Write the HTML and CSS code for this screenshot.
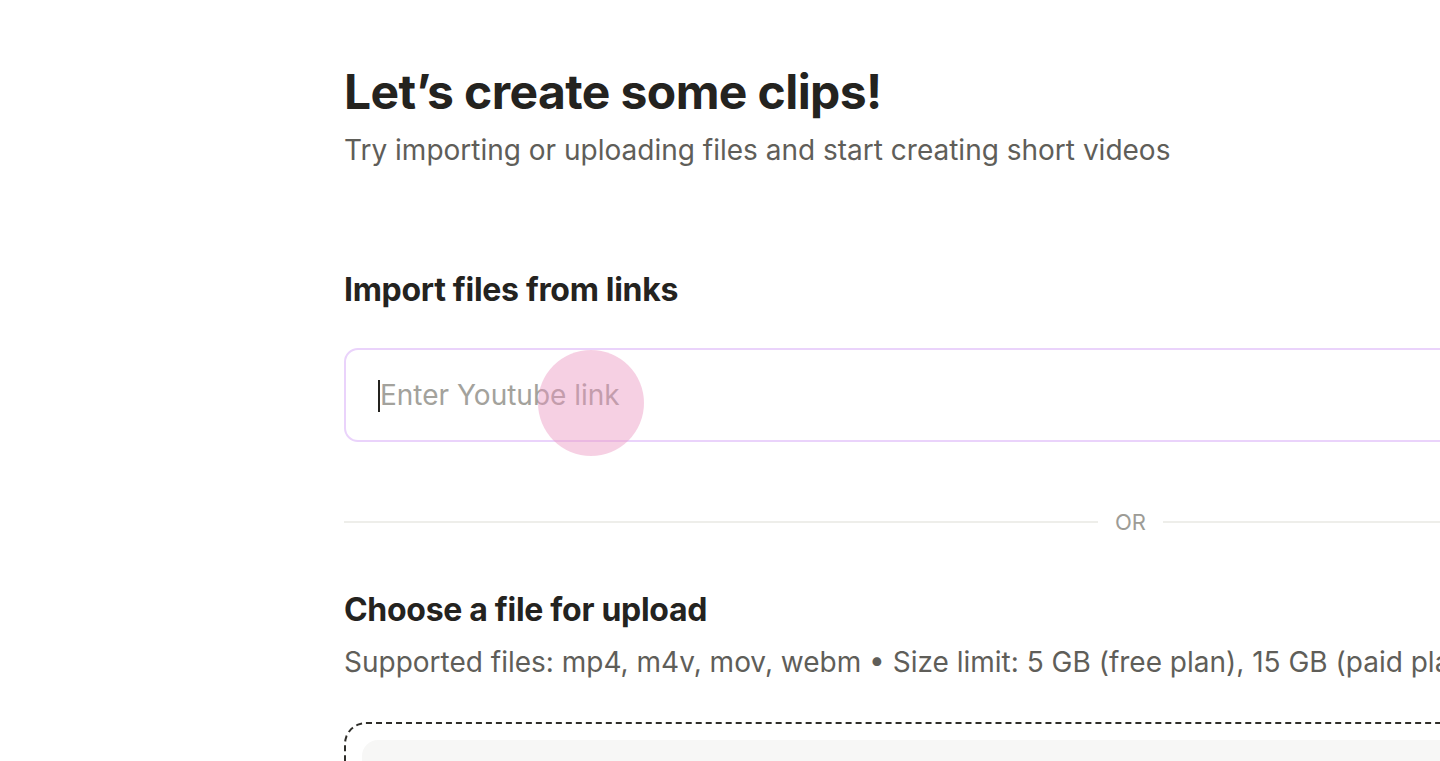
FILE: index.html
```html
<!DOCTYPE html>
<html lang="en">
<head>
  <meta charset="UTF-8">
  <meta name="viewport" content="width=device-width, initial-scale=1.0">
  <title>Create clips</title>
  <link rel="stylesheet" href="styles.css">
</head>
<body>
  <main class="page">
    <h1 class="title">Let’s create some clips!</h1>
    <p class="subtitle">Try importing or uploading files and start creating short videos</p>

    <section class="import">
      <h2 class="section-title">Import files from links</h2>
      <div class="link-field">
        <span class="caret"></span>
        <input type="text" class="link-input" placeholder="Enter Youtube link">
        <span class="touch-dot"></span>
      </div>
    </section>

    <div class="divider">
      <span class="divider-line divider-left"></span>
      <span class="divider-text">OR</span>
      <span class="divider-line"></span>
    </div>

    <section class="upload">
      <h2 class="section-title">Choose a file for upload</h2>
      <p class="upload-note">Supported files: mp4, m4v, mov, webm • Size limit: 5 GB (free plan), 15 GB (paid plan)</p>
      <div class="dropzone">
        <div class="dropzone-inner"></div>
      </div>
    </section>
  </main>
</body>
</html>
```

FILE: styles.css
```css
html, body {
  margin: 0;
  height: 100%;
  overflow: hidden;
}
body {
  font-family: Inter, "Noto Sans", sans-serif;
  background-color: #ffffff;
  color: #24231f;
}
.page {
  margin-left: 344px;
  width: 1500px;
  padding-top: 62px;
}
.title {
  margin: 0;
  font-size: 48px;
  font-weight: 700;
  letter-spacing: -0.6px;
  line-height: 60px;
}
.subtitle {
  margin: 10px 0 0;
  font-size: 28px;
  line-height: 36px;
  color: #5f5e59;
}
.import {
  margin-top: 102px;
}
.section-title {
  margin: 0;
  font-size: 32px;
  font-weight: 700;
  line-height: 40px;
  letter-spacing: -0.3px;
}
.link-field {
  position: relative;
  margin-top: 38px;
  height: 90px;
  border: 2px solid #ead3fb;
  border-radius: 14px;
  display: flex;
  align-items: center;
  padding-left: 34px;
}
.caret {
  position: absolute;
  left: 32px;
  top: 30px;
  width: 2px;
  height: 32px;
  background: #24231f;
}
.link-input {
  flex: 1;
  border: none;
  outline: none;
  background: transparent;
  font-family: Inter, "Noto Sans", sans-serif;
  font-size: 28px;
  padding: 0;
  color: #24231f;
}
.link-input::placeholder {
  color: #a3a29c;
}
.touch-dot {
  position: absolute;
  left: 192px;
  top: 0;
  width: 106px;
  height: 106px;
  border-radius: 50%;
  background: rgba(236, 150, 192, 0.45);
}
.divider {
  display: flex;
  align-items: center;
  margin-top: 68px;
  height: 24px;
}
.divider-line {
  flex: 1;
  height: 2px;
  background: #eeeeea;
}
.divider-left {
  flex: none;
  width: 754px;
}
.divider-text {
  padding: 0 17px;
  font-size: 22px;
  color: #9d9c96;
}
.upload {
  margin-top: 56px;
}
.upload-note {
  margin: 14px 0 0;
  font-size: 28px;
  line-height: 36px;
  color: #5f5e59;
}
.dropzone {
  margin-top: 42px;
  border: 2px dashed #2e2d29;
  border-radius: 22px;
  padding: 16px;
  height: 300px;
}
.dropzone-inner {
  height: 100%;
  border-radius: 16px;
  background: #f7f7f6;
}
```
